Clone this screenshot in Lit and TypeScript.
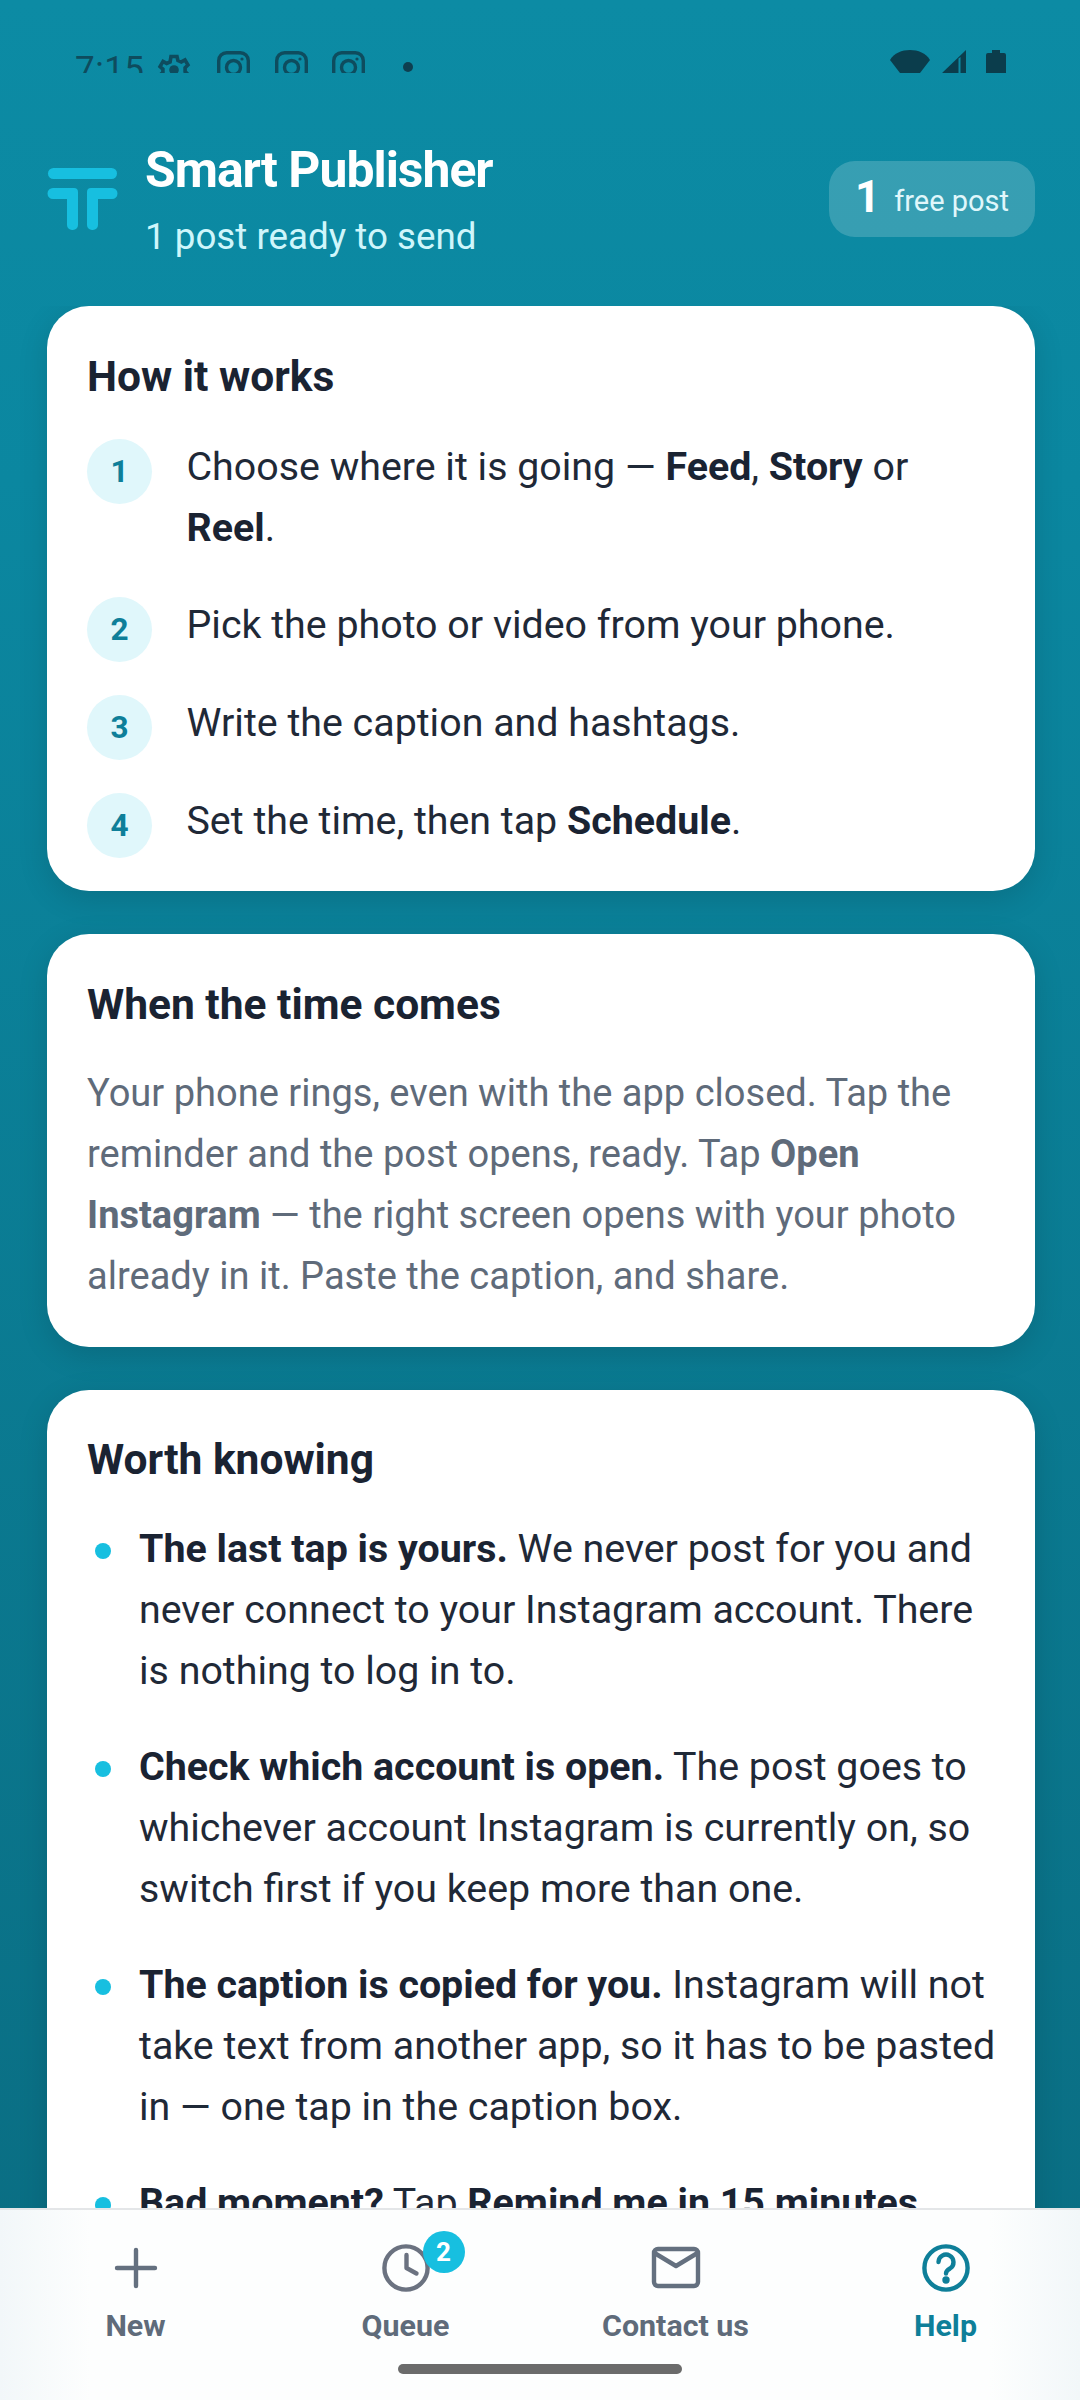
import { LitElement, html, css, svg } from "lit";
import { customElement } from "lit/decorators.js";

const insta = svg`<svg class="si" viewBox="0 0 33 33" width="33" height="33" fill="none" stroke="#0e4c5e" stroke-width="3.4"><rect x="1.7" y="1.7" width="29.6" height="29.6" rx="8"/><circle cx="16.5" cy="16.5" r="7"/><circle cx="25" cy="8" r="1.6" fill="#0e4c5e" stroke="none"/></svg>`;

@customElement("app-root")
export class AppRoot extends LitElement {
  static styles = css`
    :host { display: block; width: 1080px; height: 2400px; font-family: Roboto, "Noto Sans", sans-serif; }
    .page { width: 1080px; height: 2400px; display: flex; flex-direction: column; overflow: hidden;
      background: linear-gradient(180deg, #0c8ba4 0%, #0b87a0 20%, #0a6c81 100%); }
    .status { height: 73px; flex: none; overflow: hidden; display: flex; justify-content: space-between; padding: 47px 75px 0; box-sizing: border-box; color: #0e4c5e; }
    .sleft { display: flex; align-items: flex-start; height: 40px; }
    .time { font-size: 35px; line-height: 40px; width: 81px; letter-spacing: 0.5px; margin-top: 3px; }
    .si { margin-right: 24.5px; flex: none; margin-top: 4px; }
    .gear { margin-right: 25px; margin-top: 3px; }
    .dot { width: 10px; height: 10px; border-radius: 50%; background: #0e3f50; margin: 15px 0 0 13px; }
    .sright { display: flex; gap: 11px; margin-top: 3px; margin-right: -1px; }
    .header { flex: none; display: flex; align-items: flex-start; padding: 0 45px 0 47px; height: 233px; box-sizing: border-box; }
    .logo { margin-top: 93px; flex: none; }
    .titles { margin-left: 27px; margin-top: 67px; }
    .title { font-size: 49.875px; line-height: 60px; font-weight: 700; color: #fff; letter-spacing: -0.02em; }
    .sub { font-size: 36.75px; line-height: 54px; color: #cff6fb; margin-top: 10px; }
    .badge { margin-left: auto; margin-top: 88px; height: 76px; width: 206px; box-sizing: border-box; border-radius: 26px; background: rgba(255,255,255,.18); display: flex; align-items: center; justify-content: center; gap: 14px; color: #e0f7fb; font-size: 29px; }
    .badge b { font-size: 44px; font-weight: 700; color: #fff; line-height: 1; margin-top: -4px; }
    .badge span { margin-top: 4px; }
    .scroll { flex: 1; min-height: 0; overflow: hidden; padding: 0 45px 0 47px; display: flex; flex-direction: column; gap: 43px; }
    .card { flex: none; background: #fff; border-radius: 42px; padding: 42px 40px 40px; box-shadow: 0 8px 30px rgba(0,0,0,.13); }
    .card.last { padding-top: 41px; }
    h2 { margin: 0; font-size: 42.5px; line-height: 58px; font-weight: 700; color: #1a2332; }
    .steps { display: flex; flex-direction: column; gap: 33px; margin: 33px 0 -7px; }
    .step { display: flex; align-items: flex-start; gap: 34.5px; }
    .num { flex: none; width: 65px; height: 65px; border-radius: 50%; background: #e0f7fb; color: #0e7f99; font-size: 31.5px; font-weight: 700; display: flex; align-items: center; justify-content: center; }
    .stxt { font-size: 39.375px; line-height: 61px; color: #1f2937; margin: -3px 0 6px; }
    .stxt b, .li b { font-weight: 700; color: #1a2332; }
    .para { margin: 29px 0 0; font-size: 38.06px; line-height: 61px; color: #5f6b7a; }
    .para b { font-weight: 700; color: #5f6b7a; }
    .list { display: flex; flex-direction: column; gap: 35px; margin-top: 29px; }
    .li { display: flex; gap: 28px; font-size: 39.375px; line-height: 61px; color: #1f2937; }
    .li > div { margin-right: -1px; }
    .bullet { flex: none; width: 16px; height: 16px; border-radius: 50%; background: #17bfe0; margin: 25px 0 0 8px; }
    .nav { flex: none; height: 192px; box-sizing: border-box; border-top: 2px solid #e4e6e8; background: linear-gradient(90deg, #f2f7f9 0, #fdfefe 90px, #fdfefe 990px, #f2f7f9 100%); display: grid; grid-template-columns: repeat(4, 1fr); position: relative; }
    .tab { display: flex; flex-direction: column; align-items: center; padding: 33px 0 0 1px; color: #5f6b7a; font-size: 30.4px; font-weight: 700; }
    .tab.on { color: #0e7f99; }
    .ic { position: relative; width: 50px; height: 50px; }
    .tab span { margin-top: 14.5px; line-height: 36px; }
    .cnt { position: absolute; left: 42px; top: -12px; width: 42px; height: 42px; border-radius: 50%; background: #17bfe0; color: #fff; font-size: 26px; font-weight: 700; display: flex; align-items: center; justify-content: center; }
    .home { position: absolute; left: 398px; bottom: 26px; width: 284px; height: 10px; border-radius: 5px; background: #6b6b6b; }
  `;

  render() {
    return html`<div class="page">
      <div class="status">
        <div class="sleft">
          <div class="time">7:15</div>
          <svg class="gear" width="36" height="40" viewBox="0 0 24 24" fill="none" stroke="#0e4c5e" stroke-width="2.4"><path d="M10 3h4l.6 2.6 2.3 1 2.4-1.3 2 3.4-1.9 1.8v2.6l1.9 1.8-2 3.4-2.4-1.3-2.3 1L14 21h-4l-.6-2.6-2.3-1-2.4 1.3-2-3.4 1.9-1.8V11.4L2.7 9.7l2-3.4 2.4 1.3 2.3-1z"/><circle cx="12" cy="12" r="3.2" fill="#0e4c5e" stroke="none"/></svg>
          ${insta}${insta}${insta}
          <div class="dot"></div>
        </div>
        <div class="sright">
          <svg width="40" height="30" viewBox="0 0 40 30"><path d="M0 10C4 3 12 0 20 0s16 3 20 10L20 36z" fill="#0b3d4c"/></svg>
          <svg width="25" height="30" viewBox="0 0 25 30"><path d="M25 0v24H0z" fill="#0b3d4c"/><path d="M19.5 7v17h-2V8.5z" fill="#0c8ba4"/></svg>
          <svg width="20" height="30" viewBox="0 0 20 30" style="margin-left:9px"><path d="M6 0h8v3h4a2 2 0 0 1 2 2v25H0V5a2 2 0 0 1 2-2h4z" fill="#0b3d4c"/></svg>
        </div>
      </div>
      <div class="header">
        <svg class="logo" width="71" height="66" viewBox="0 0 71 66" fill="#17bfe0"><rect x="1" y="2" width="69" height="11" rx="5.5"/><path d="M6 22h21a4 4 0 0 1 4 4v33a5 5 0 0 1-5 5h-1a5 5 0 0 1-5-5V33H6a5.5 5.5 0 0 1 0-11z"/><path d="M44 22h21a5.5 5.5 0 0 1 0 11H51v26a5 5 0 0 1-5 5h-1a5 5 0 0 1-5-5V26a4 4 0 0 1 4-4z"/></svg>
        <div class="titles">
          <div class="title">Smart Publisher</div>
          <div class="sub">1 post ready to send</div>
        </div>
        <div class="badge"><b>1</b><span>free post</span></div>
      </div>
      <div class="scroll">
        <section class="card">
          <h2>How it works</h2>
          <div class="steps">
            <div class="step"><div class="num">1</div><div class="stxt">Choose where it is going — <b>Feed</b>, <b>Story</b> or <b>Reel</b>.</div></div>
            <div class="step"><div class="num">2</div><div class="stxt">Pick the photo or video from your phone.</div></div>
            <div class="step"><div class="num">3</div><div class="stxt">Write the caption and hashtags.</div></div>
            <div class="step"><div class="num">4</div><div class="stxt">Set the time, then tap <b>Schedule</b>.</div></div>
          </div>
        </section>
        <section class="card">
          <h2>When the time comes</h2>
          <p class="para">Your phone rings, even with the app closed. Tap the reminder and the post opens, ready. Tap <b>Open Instagram</b> — the right screen opens with your photo already in it. Paste the caption, and share.</p>
        </section>
        <section class="card last">
          <h2>Worth knowing</h2>
          <div class="list">
            <div class="li"><i class="bullet"></i><div><b>The last tap is yours.</b> We never post for you and never connect to your Instagram account. There is nothing to log in to.</div></div>
            <div class="li"><i class="bullet"></i><div><b>Check which account is open.</b> The post goes to whichever account Instagram is currently on, so switch first if you keep more than one.</div></div>
            <div class="li"><i class="bullet"></i><div><b>The caption is copied for you.</b> Instagram will not take text from another app, so it has to be pasted in — one tap in the caption box.</div></div>
            <div class="li"><i class="bullet"></i><div><b>Bad moment?</b> Tap <b>Remind me in 15 minutes</b>.</div></div>
          </div>
        </section>
      </div>
      <nav class="nav">
        <div class="tab"><div class="ic"><svg width="50" height="50" viewBox="0 0 50 50" fill="none" stroke="#64707f" stroke-width="4.4" stroke-linecap="round"><path d="M25 7v36M6 25h38"/></svg></div><span>New</span></div>
        <div class="tab"><div class="ic"><svg width="50" height="50" viewBox="0 0 50 50" fill="none" stroke="#6b7280" stroke-width="4.4" stroke-linecap="round" stroke-linejoin="round"><circle cx="25" cy="25" r="21.6"/><path d="M25.5 12v13l10 5.5"/></svg><div class="cnt">2</div></div><span>Queue</span></div>
        <div class="tab"><div class="ic"><svg width="50" height="50" viewBox="0 0 50 50" fill="none" stroke="#64707f" stroke-width="4.4" stroke-linecap="round" stroke-linejoin="round"><rect x="3" y="6" width="44" height="37" rx="4"/><path d="M3.5 10l21.5 13 21.5-13"/></svg></div><span>Contact us</span></div>
        <div class="tab on"><div class="ic"><svg width="50" height="50" viewBox="0 0 50 50" fill="none" stroke="#0e7f99" stroke-width="4.4" stroke-linecap="round" stroke-linejoin="round"><circle cx="25" cy="25" r="21.6"/><path d="M17.5 19a7.5 7.5 0 1 1 11.5 6.5c-3 1.7-4 3-4 5"/><circle cx="25" cy="37" r="1.5" fill="#0e7f99"/></svg></div><span>Help</span></div>
        <div class="home"></div>
      </nav>
    </div>`;
  }
}
